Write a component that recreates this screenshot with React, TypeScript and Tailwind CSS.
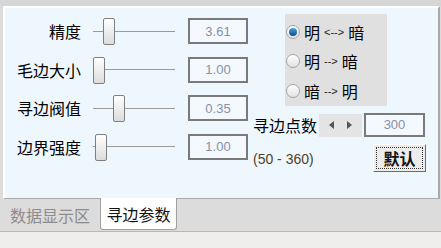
import React from 'react';

const cjk = { fontFamily: '"Noto Sans CJK SC", "Noto Sans", sans-serif' };
const latin = { fontFamily: '"Liberation Sans", Arial, sans-serif' };

const rows = [
  { label: '精度', thumb: 10, value: '3.61' },
  { label: '毛边大小', thumb: 0, value: '1.00' },
  { label: '寻边阀值', thumb: 20, value: '0.35' },
  { label: '边界强度', thumb: 2, value: '1.00' },
];

const Slider = ({ offset }: { offset: number }) => (
  <div className="relative w-[82px] h-[30px] flex items-center">
    <div className="w-full h-px bg-[#9a9a9a]" />
    <div
      className="absolute top-[2px] w-[12px] h-[27px] rounded-[2px] border border-[#7f7f7f] bg-gradient-to-b from-white to-[#dcdcdc]"
      style={{ left: offset }}
    />
  </div>
);

const Radio = ({ checked }: { checked?: boolean }) => (
  <div className="w-[14px] h-[14px] rounded-full border border-[#a5a5a5] bg-gradient-to-b from-white to-[#e2e2e2] flex items-center justify-center">
    {checked && <div className="w-[8px] h-[8px] rounded-full bg-gradient-to-b from-[#4aa3e0] to-[#0b4f8c]" />}
  </div>
);

const App: React.FC = () => {
  return (
    <div className="w-[441px] h-[248px] bg-[#dcdcdc] overflow-hidden flex flex-col" style={cjk}>
      <div className="h-[6px] bg-[#d6d6d6]" />
      {/* panel */}
      <div className="ml-[3px] w-[437px] h-[193px] border-t-2 border-l-2 border-white border-r-2 border-r-[#a9a9a9] border-b border-b-[#a9a9a9] bg-[#eff7fe] flex">
        {/* left column */}
        <div className="flex flex-col pt-[4px] pl-[4px]">
          {rows.map((r, i) => (
            <div key={i} className="h-[38.5px] flex items-center">
              <div className="w-[72px] text-right text-[16px] text-black leading-none">{r.label}</div>
              <div className="ml-[12px]">
                <Slider offset={r.thumb} />
              </div>
              <div
                className="ml-[13px] w-[60px] h-[26px] border-2 border-[#7a7a7a] bg-[#f3f9ff] flex items-center justify-center text-[13px] text-[#8a8fa4]"
                style={latin}
              >
                {r.value}
              </div>
            </div>
          ))}
        </div>
        {/* right column */}
        <div className="flex flex-col pl-[5px] pt-[6px]">
          <div className="ml-[32px] w-[102px] h-[92px] bg-[#e0e0e0] flex flex-col justify-around pt-[3px] pl-[1px]">
            <div className="flex items-center gap-[4px]">
              <Radio checked />
              <span className="text-[16px] leading-none text-black">明</span>
              <span className="text-[11px] text-[#222]" style={latin}>&lt;--&gt;</span>
              <span className="text-[16px] leading-none text-black">暗</span>
            </div>
            <div className="flex items-center gap-[4px]">
              <Radio />
              <span className="text-[16px] leading-none text-black">明</span>
              <span className="text-[11px] text-[#222]" style={latin}>--&gt;</span>
              <span className="text-[16px] leading-none text-black">暗</span>
            </div>
            <div className="flex items-center gap-[4px]">
              <Radio />
              <span className="text-[16px] leading-none text-black">暗</span>
              <span className="text-[11px] text-[#222]" style={latin}>--&gt;</span>
              <span className="text-[16px] leading-none text-black">明</span>
            </div>
          </div>
          <div className="mt-[7px] flex items-center h-[24px]">
            <span className="w-[66px] text-[16px] leading-none text-black">寻边点数</span>
            <div className="w-[43px] h-[23px] bg-[#e4e4e4] flex items-center justify-around px-[4px]">
              <svg width="6" height="8" viewBox="0 0 6 8"><path d="M5 0 L0 4 L5 8 Z" fill="#555" /></svg>
              <svg width="6" height="8" viewBox="0 0 6 8"><path d="M1 0 L6 4 L1 8 Z" fill="#555" /></svg>
            </div>
            <div
              className="ml-[2px] w-[61px] h-[24px] border-2 border-[#7a7a7a] bg-[#f3f9ff] flex items-center justify-center text-[13px] text-[#8a8fa4]"
              style={latin}
            >
              300
            </div>
          </div>
          <div className="mt-[7px] flex items-center">
            <span className="w-[120px] text-[14px] text-[#4f4128] pt-[3px]" style={latin}>(50 - 360)</span>
            <div className="w-[53px] h-[28px] border border-t-white border-l-white border-r-[#6a6a6a] border-b-[#6a6a6a] bg-[#ececec] p-[2px]">
              <div className="w-full h-full border border-dotted border-[#333] flex items-center justify-center text-[16px] font-bold leading-none text-[#111]">
                默认
              </div>
            </div>
          </div>
        </div>
      </div>
      {/* tabs */}
      <div className="h-[33px] flex items-start border-b border-[#b8b8b8]">
        <div className="ml-[10px] w-[90px] h-[31px] flex items-center text-[16px] text-[#8c8c8c]">数据显示区</div>
        <div className="w-[77px] h-[32px] bg-white border-l border-r border-b border-[#a0a0a0] rounded-b-[3px] flex items-center justify-center text-[16px] text-[#111] -mt-px">
          寻边参数
        </div>
      </div>
      <div className="flex-1 bg-[#f0eeed]" />
    </div>
  );
};

export default App;
